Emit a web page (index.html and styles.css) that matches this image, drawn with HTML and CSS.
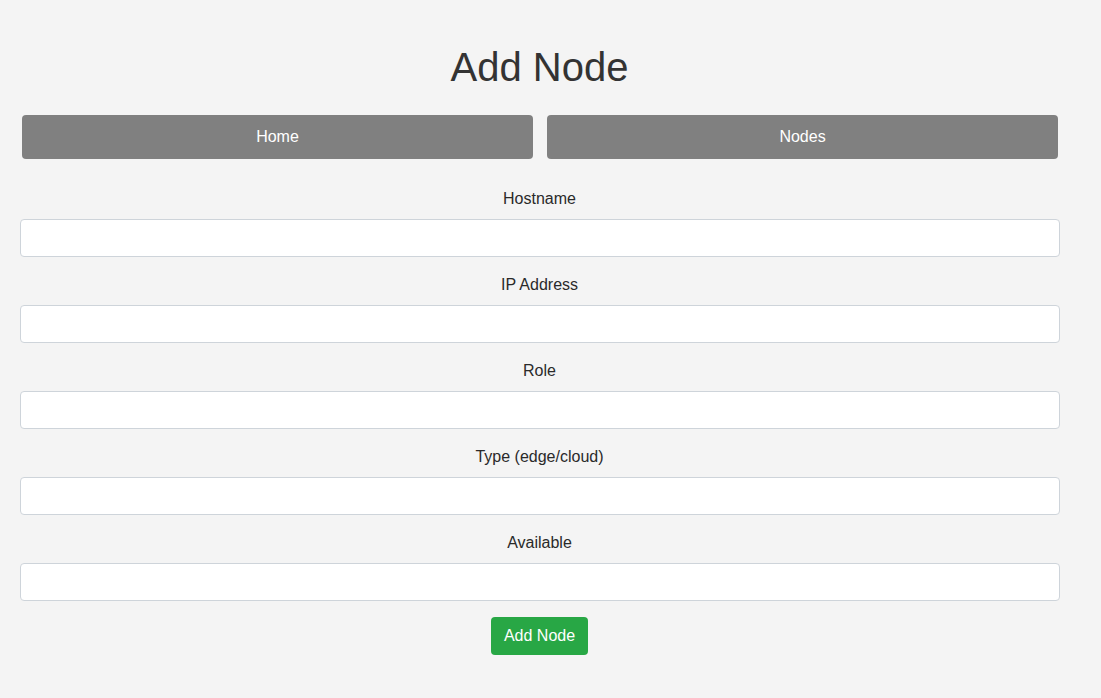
FILE: index.html
```html
<!DOCTYPE html>
<html>
<head>
<meta charset="utf-8">
<title>Add Node</title>
<link rel="stylesheet" href="styles.css">
</head>
<body>
<div class="page">
  <h1 class="title">Add Node</h1>
  <nav class="nav">
    <a class="nav-btn" href="#">Home</a>
    <a class="nav-btn" href="#">Nodes</a>
  </nav>
  <form class="form">
    <div class="field">
      <label class="label">Hostname</label>
      <input class="input" type="text">
    </div>
    <div class="field">
      <label class="label">IP Address</label>
      <input class="input" type="text">
    </div>
    <div class="field">
      <label class="label">Role</label>
      <input class="input" type="text">
    </div>
    <div class="field">
      <label class="label">Type (edge/cloud)</label>
      <input class="input" type="text">
    </div>
    <div class="field">
      <label class="label">Available</label>
      <input class="input" type="text">
    </div>
    <div class="actions">
      <button class="submit" type="button">Add Node</button>
    </div>
  </form>
</div>
</body>
</html>
```
FILE: styles.css
```css
html, body {
  margin: 0;
  padding: 0;
  background: #f4f4f4;
}
body {
  font-family: "Liberation Sans", Arial, sans-serif;
  color: #222;
}
.page {
  width: 1040px;
  margin-left: 20px;
  padding-top: 44px;
}
.title {
  margin: 0;
  font-size: 40px;
  font-weight: normal;
  line-height: 46px;
  height: 46px;
  text-align: center;
  color: #333;
  padding-right: 1px;
}
.nav {
  display: flex;
  gap: 14px;
  padding: 0 2px;
  margin-top: 25px;
}
.nav-btn {
  flex: 1;
  height: 44px;
  line-height: 43px;
  background: #808080;
  color: #fff;
  text-align: center;
  text-decoration: none;
  font-size: 16px;
  border-radius: 4px;
}
.form {
  margin-top: 30px;
  display: flex;
  flex-direction: column;
  gap: 18px;
}
.field {
  display: flex;
  flex-direction: column;
  gap: 10px;
}
.label {
  display: block;
  text-align: center;
  font-size: 16px;
  line-height: 20px;
  color: #2a2a2a;
  padding-right: 1px;
}
.input {
  box-sizing: border-box;
  width: 100%;
  height: 38px;
  margin: 0;
  border: 1px solid #ced4da;
  border-radius: 4px;
  background: #fff;
  font-size: 16px;
  padding: 6px 12px;
}
.actions {
  display: flex;
  justify-content: center;
  margin-top: -2px;
  padding-right: 1px;
}
.submit {
  width: 97px;
  height: 38px;
  padding: 0;
  background: #28a745;
  border: none;
  border-radius: 4px;
  color: #fff;
  font-family: "Liberation Sans", Arial, sans-serif;
  font-size: 16px;
}
```
